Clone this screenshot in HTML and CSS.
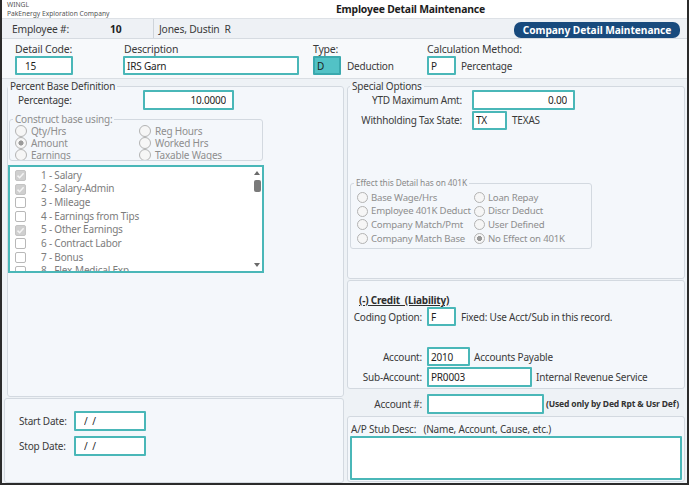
FILE: index.html
```html
<!DOCTYPE html>
<html lang="en">
<head>
<meta charset="utf-8">
<title>Employee Detail Maintenance</title>
<link rel="stylesheet" href="styles.css">
</head>
<body>
<div class="win">
  <header class="hdr">
    <div class="hdr-r1">
      <div class="co"><div>WINGL</div><div>PakEnergy Exploration Company</div></div>
      <div class="title">Employee Detail Maintenance</div>
    </div>
    <div class="hdr-r2">
      <div class="emp"><span class="emp-lbl">Employee #:</span><b class="empno">10</b></div>
      <div class="empname">Jones, Dustin&nbsp; R</div>
      <div class="cdm">Company Detail Maintenance</div>
    </div>
  </header>

  <section class="codes">
    <div class="fld f-code"><label class="flbl">Detail Code:</label><input class="inp w58 pl8" value="15" readonly></div>
    <div class="fld f-desc"><label class="flbl pl1">Description</label><input class="inp w176" value="IRS Garn" readonly></div>
    <div class="fld f-type"><label class="flbl">Type:</label><div class="frow"><input class="inp w28 teal" value="D" readonly><span class="after">Deduction</span></div></div>
    <div class="fld f-calc"><label class="flbl">Calculation Method:</label><div class="frow"><input class="inp w29" value="P" readonly><span class="after a5">Percentage</span></div></div>
  </section>

  <main class="body">
    <div class="col-l">
      <fieldset class="grp pbd">
        <legend>Percent Base Definition</legend>
        <div class="pct-row"><span class="pct-lbl">Percentage:</span><input class="inp w91 right" value="10.0000" readonly></div>
        <fieldset class="grp cbu">
          <legend>Construct base using:</legend>
          <div class="radios cbu-r">
            <span class="ropt"><span class="rad"></span>Qty/Hrs</span>
            <span class="ropt"><span class="rad"></span>Reg Hours</span>
            <span class="ropt"><span class="rad on"></span>Amount</span>
            <span class="ropt"><span class="rad"></span>Worked Hrs</span>
            <span class="ropt"><span class="rad"></span>Earnings</span>
            <span class="ropt"><span class="rad"></span>Taxable Wages</span>
          </div>
        </fieldset>
        <div class="listbox">
          <ul class="items">
            <li><span class="chk on"><svg viewBox="0 0 11 11" width="11" height="11"><polyline points="2.5,5.6 4.6,7.7 8.6,3.2"/></svg></span>1 - Salary</li>
            <li><span class="chk on"><svg viewBox="0 0 11 11" width="11" height="11"><polyline points="2.5,5.6 4.6,7.7 8.6,3.2"/></svg></span>2 - Salary-Admin</li>
            <li><span class="chk"></span>3 - Mileage</li>
            <li><span class="chk"></span>4 - Earnings from Tips</li>
            <li><span class="chk on"><svg viewBox="0 0 11 11" width="11" height="11"><polyline points="2.5,5.6 4.6,7.7 8.6,3.2"/></svg></span>5 - Other Earnings</li>
            <li><span class="chk"></span>6 - Contract Labor</li>
            <li><span class="chk"></span>7 - Bonus</li>
            <li><span class="chk"></span>8 - Flex-Medical Exp</li>
          </ul>
          <div class="sbar"><span class="arr-up"></span><span class="thumb"></span><span class="arr-dn"></span></div>
        </div>
      </fieldset>
      <div class="panel dates">
        <div class="drow"><span class="dlbl">Start Date:</span><input class="inp w72 pl8" value="/  /" readonly></div>
        <div class="drow"><span class="dlbl">Stop Date:</span><input class="inp w72 pl8" value="/  /" readonly></div>
      </div>
    </div>

    <div class="col-r">
      <fieldset class="grp spec">
        <legend>Special Options</legend>
        <div class="srow"><span class="slbl">YTD Maximum Amt:</span><input class="inp w103 right" value="0.00" readonly></div>
        <div class="srow"><span class="slbl">Withholding Tax State:</span><input class="inp w35" value="TX" readonly><span class="after a5">TEXAS</span></div>
        <fieldset class="grp e401">
          <legend>Effect this Detail has on 401K</legend>
          <div class="radios e401-r">
            <span class="ropt"><span class="rad"></span>Base Wage/Hrs</span>
            <span class="ropt"><span class="rad"></span>Loan Repay</span>
            <span class="ropt"><span class="rad"></span>Employee 401K Deduct</span>
            <span class="ropt"><span class="rad"></span>Discr Deduct</span>
            <span class="ropt"><span class="rad"></span>Company Match/Pmt</span>
            <span class="ropt"><span class="rad"></span>User Defined</span>
            <span class="ropt"><span class="rad"></span>Company Match Base</span>
            <span class="ropt"><span class="rad on"></span>No Effect on 401K</span>
          </div>
        </fieldset>
      </fieldset>

      <div class="panel credit">
        <div class="ctitle">(-) Credit&nbsp; (Liability)</div>
        <div class="crow"><span class="clbl">Coding Option:</span><input class="inp w29" value="F" readonly><span class="after a5">Fixed: Use Acct/Sub in this record.</span></div>
        <div class="crow mt21"><span class="clbl">Account:</span><input class="inp w43" value="2010" readonly><span class="after a4">Accounts Payable</span></div>
        <div class="crow mt1"><span class="clbl">Sub-Account:</span><input class="inp w105" value="PR0003" readonly><span class="after a4">Internal Revenue Service</span></div>
      </div>

      <div class="acct">
        <span class="albl">Account #:</span><input class="inp w117" value="" readonly><span class="note">(Used only by Ded Rpt &amp; Usr Def)</span>
      </div>

      <div class="panel stub">
        <div class="stub-lbl">A/P Stub Desc:&nbsp;&nbsp; (Name, Account, Cause, etc.)</div>
        <textarea class="inp stub-ta" readonly></textarea>
      </div>
    </div>
  </main>
</div>
</body>
</html>
```

FILE: styles.css
```css
* { box-sizing: border-box; }
html, body { margin: 0; padding: 0; }
body {
  font-family: "Noto Sans", "Open Sans", sans-serif;
  font-size: 10px;
  letter-spacing: -0.2px;
  color: #3a3a3a;
  background: #ffffff;
}

.win {
  width: 689px;
  height: 485px;
  border: 2px solid #2b2b2b;
  border-top: 0;
  background: #eef2f6;
  display: flex;
  flex-direction: column;
  overflow: hidden;
}

/* header */
.hdr-r1 {
  height: 19px;
  display: flex;
  background: #ffffff;
  border-bottom: 1px solid #dde1e6;
}
.co {
  width: 151px;
  padding: 1px 0 0 5px;
  font-size: 6.7px;
  line-height: 8.5px;
  letter-spacing: 0;
  color: #555;
}
.title {
  padding-left: 183px;
  font-weight: 700;
  font-size: 10.4px;
  line-height: 18px;
  letter-spacing: -0.2px;
  color: #1c1c1c;
}
.hdr-r2 {
  height: 20px;
  display: flex;
  background: #eef1f5;
  border-bottom: 1px solid #d6dbe1;
}
.emp {
  width: 152px;
  padding: 1px 0 0 10px;
  line-height: 18px;
  border-right: 1px solid #cfd4da;
  font-size: 10.3px;
}
.emp-lbl { display: inline-block; width: 98px; }
.empno { font-weight: 700; color: #222; }
.empname { padding: 1px 0 0 5px; line-height: 18px; font-size: 10.3px; }
.cdm {
  margin-left: auto;
  margin-right: 7px;
  align-self: flex-end;
  width: 166px;
  height: 16px;
  background: #184a7d;
  color: #fff;
  font-weight: 700;
  font-size: 10.2px;
  line-height: 16px;
  text-align: center;
  border-radius: 7px;
  letter-spacing: -0.05px;
}

/* codes row */
.codes {
  height: 41px;
  display: flex;
  padding: 3px 0 0 13px;
  border-bottom: 1px solid #d9dee3;
  background: #f7f9fb;
}
.fld { display: flex; flex-direction: column; }
.flbl { line-height: 14px; font-size: 10.5px; }
.pl1 { padding-left: 1px; }
.f-code { width: 108px; }
.f-desc { width: 190px; }
.f-type { width: 114px; }
.frow { display: flex; align-items: center; }
.after { margin-left: 6px; }
.a5 { margin-left: 5px; }
.a4 { margin-left: 4px; }

/* inputs */
.inp {
  display: block;
  height: 19px;
  margin: 0;
  padding: 0 2px;
  border: 2px solid #4ab7b8;
  border-radius: 1px;
  background: #fff;
  font: inherit;
  letter-spacing: inherit;
  color: #1e1e1e;
  outline: none;
}
.pl8 { padding-left: 8px; }
.right { text-align: right; padding-right: 6px; }
.teal { background: #52c2c6; border-color: #3aa9ae; }
.w28 { width: 28px; } .w29 { width: 29px; } .w35 { width: 35px; }
.w43 { width: 43px; } .w58 { width: 58px; } .w72 { width: 72px; height: 20px; }
.w91 { width: 91px; height: 20px; } .w103 { width: 103px; height: 20px; }
.w105 { width: 105px; height: 20px; } .w117 { width: 117px; height: 20px; }
.w176 { width: 176px; }

/* body */
.body { flex: 1; display: flex; }
.col-l { width: 345px; display: flex; flex-direction: column; }
.col-r { width: 338px; display: flex; flex-direction: column; }

fieldset.grp {
  margin: 0;
  padding: 0;
  min-width: 0;
  border: 1px solid #d3d9e0;
  border-radius: 3px;
  background: #f4f7fb;
}
fieldset.grp > legend {
  padding: 0 2px;
  line-height: 8px;
  font-size: 10px;
}
.panel {
  border: 1px solid #d3d9e0;
  border-radius: 3px;
  background: #f4f7fb;
}

/* percent base definition */
.pbd { margin: 3px 0 0 5px !important; width: 337px; height: 315px; }
.pct-row { display: flex; align-items: center; height: 20px; }
.pct-lbl { width: 135px; padding-left: 10px; }
.cbu { margin: 5px 0 0 1px !important; width: 254px; height: 46px; }
.cbu > legend { margin-left: 3px; color: #8e8e8e; }
.radios { display: grid; color: #8e8e8e; }
.ropt { display: flex; align-items: center; white-space: nowrap; }
.rad {
  width: 12px;
  height: 12px;
  flex: none;
  border-radius: 50%;
  border: 1px solid #b3b3b3;
  background: #f6f6f6;
  margin-right: 4px;
}
.rad.on { background: radial-gradient(circle, #9a9a9a 0 2.3px, #f6f6f6 2.8px); }
.cbu-r {
  height: 37px;
  overflow: hidden;
  padding: 1.5px 0 0 5px;
  grid-template-columns: 124px auto;
  grid-auto-rows: 12px;
  line-height: 12px;
}

.listbox {
  margin-top: 4px;
  width: 256px;
  height: 108px;
  border: 2px solid #4ab7b8;
  background: #fff;
  display: flex;
}
.items {
  flex: 1;
  margin: 0;
  padding: 1.5px 0 0 5px;
  list-style: none;
  overflow: hidden;
  color: #7c7c7c;
}
.items li { height: 13.7px; line-height: 13.7px; display: flex; align-items: center; white-space: nowrap; }
.chk {
  width: 11px;
  height: 11px;
  flex: none;
  margin-right: 15px;
  border: 1px solid #b8b8b8;
  border-radius: 2px;
  background: #fff;
  display: flex;
}
.chk.on { background: #cfcfcf; border-color: #c4c4c4; }
.chk svg { margin: -1px; }
.chk polyline { fill: none; stroke: #f4f4f4; stroke-width: 1.5; }
.sbar { width: 10px; flex: none; display: flex; flex-direction: column; align-items: center; }
.arr-up {
  margin-top: 4px;
  width: 0; height: 0;
  border-left: 3px solid transparent;
  border-right: 3px solid transparent;
  border-bottom: 4px solid #6a6a6a;
}
.thumb { margin-top: 5px; width: 7px; height: 12px; border-radius: 2px; background: #7a7a7a; }
.arr-dn {
  margin-top: auto;
  margin-bottom: 4px;
  width: 0; height: 0;
  border-left: 3px solid transparent;
  border-right: 3px solid transparent;
  border-top: 4px solid #6a6a6a;
}

/* dates */
.dates { margin: 1px 0 0 2px; width: 340px; height: 85px; padding: 12px 0 0 14px; }
.drow { display: flex; align-items: center; }
.drow + .drow { margin-top: 5px; }
.dlbl { width: 55px; }

/* special options */
.spec { margin-top: 3px !important; width: 338px; height: 197px; }
.spec > legend { margin-left: 2px; }
.srow { display: flex; align-items: center; height: 20px; }
.slbl { width: 114px; text-align: right; }
.srow .inp { margin-left: 10px; }
.e401 { margin: 49px 0 0 2px !important; width: 242px; height: 70px; }
.e401 > legend { margin-left: 3px; color: #8a8a8a; font-size: 8.4px !important; letter-spacing: -0.1px; }
.e401-r {
  padding: 3.5px 0 0 6px;
  grid-template-columns: 117px auto;
  grid-auto-rows: 13.8px;
  line-height: 13.8px;
  font-size: 9.6px;
}
.e401-r .rad { width: 11px; height: 11px; margin-right: 3px; }

/* credit */
.credit { margin-top: 1px; height: 109px; padding-top: 12px; }
.ctitle { padding-left: 11px; line-height: 14px; font-weight: 700; text-decoration: underline; color: #2e2e2e; }
.crow { display: flex; align-items: center; }
.clbl { width: 74px; text-align: right; }
.crow .inp { margin-left: 5px; }
.mt21 { margin-top: 21px; }
.mt1 { margin-top: 1px; }

/* account # */
.acct { height: 27px; padding-top: 5px; display: flex; align-items: flex-start; }
.albl { width: 75px; text-align: right; line-height: 20px; }
.acct .inp { margin-left: 5px; }
.note { margin-left: 2px; font-size: 8.5px; font-weight: 700; line-height: 20px; color: #333; letter-spacing: -0.15px; white-space: nowrap; }

/* stub */
.stub { height: 66px; padding-top: 6px; }
.stub-lbl { padding-left: 3px; line-height: 13px; }
.stub-ta { margin-left: 2px; width: 332px; height: 44px; resize: none; }
```
